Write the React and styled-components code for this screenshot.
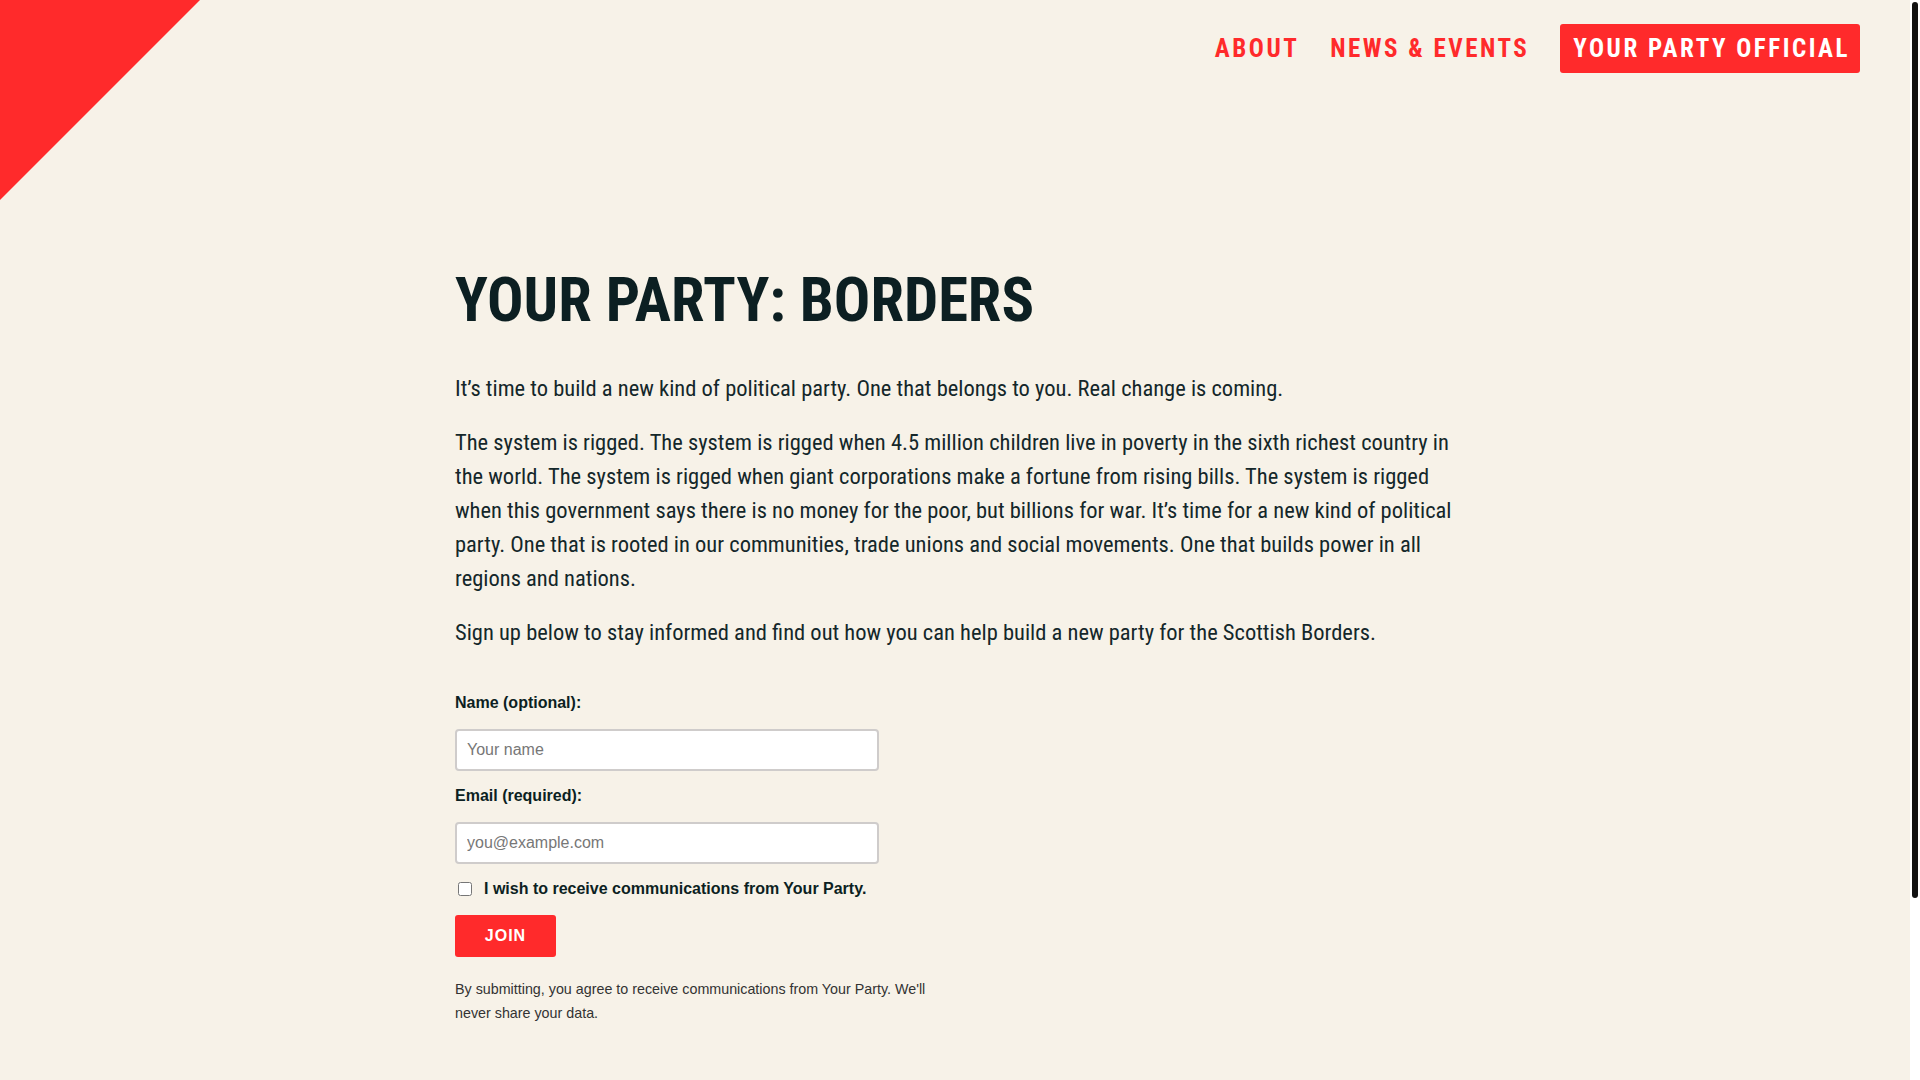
import styled, { createGlobalStyle } from "styled-components";

const red = "#ff2a2b";
const ink = "#0c1f22";
const narrow = `"Roboto Condensed", "Liberation Sans", sans-serif`;
const sans = `"Liberation Sans", Arial, sans-serif`;

const GlobalStyle = createGlobalStyle`
  html, body {
    margin: 0;
    padding: 0;
    height: 100%;
    overflow: hidden;
    background: #f7f2e8;
  }

  body {
    font-family: ${sans};
    color: ${ink};
  }
`;

const Page = styled.div`
  display: flex;
  height: 100vh;
  background: #f7f2e8;
`;

const Scroller = styled.div`
  flex: 1;
  overflow-y: auto;
  scrollbar-width: none;

  &::-webkit-scrollbar {
    display: none;
  }
`;

const Rail = styled.div`
  width: 10px;
  box-sizing: border-box;
  padding: 2px;
  background: #fff;
`;

const Thumb = styled.div`
  height: 896px;
  border-radius: 3px;
  background: #111;
`;

const Content = styled.div`
  padding-bottom: 290px;
`;

const Header = styled.header`
  display: flex;
  justify-content: space-between;
  align-items: flex-start;
  height: 200px;
`;

const Corner = styled.div`
  width: 200px;
  height: 200px;
  background: ${red};
  clip-path: polygon(0 0, 100% 0, 0 100%);
`;

const Nav = styled.nav`
  display: flex;
  align-items: center;
  gap: 31px;
  margin: 24px 50px 0 0;
`;

const NavLink = styled.a`
  display: inline-flex;
  align-items: center;
  height: 49px;
  padding: ${({ $cta }) => ($cta ? "0 10px 0 13px" : "0")};
  font-family: ${narrow};
  font-weight: 700;
  font-size: 25px;
  letter-spacing: 2.5px;
  text-transform: uppercase;
  text-decoration: none;
  color: ${({ $cta }) => ($cta ? "#fff" : red)};
  background: ${({ $cta }) => ($cta ? red : "transparent")};
  border-radius: ${({ $cta }) => ($cta ? "3px" : "0")};
`;

const Main = styled.main`
  max-width: 1000px;
  margin: 0 auto;
  padding-top: 65px;
`;

const Title = styled.h1`
  margin: 0 0 34px;
  font-family: ${narrow};
  font-weight: 700;
  font-size: 60.6px;
  line-height: 72px;
  color: ${ink};
`;

const Paragraph = styled.p`
  margin: 0 0 20px;
  font-family: ${narrow};
  font-size: 22.5px;
  line-height: 34px;
  color: #14272a;
`;

const Form = styled.form`
  display: flex;
  flex-direction: column;
  align-items: flex-start;
  max-width: 480px;
  padding-top: 25px;
  font-family: ${sans};
`;

const Label = styled.label`
  font-weight: 700;
  font-size: 16px;
  line-height: 18px;
  color: ${ink};
  margin-bottom: 17px;
`;

const Input = styled.input`
  box-sizing: border-box;
  width: 424px;
  height: 42px;
  padding: 0 10px;
  margin-bottom: 16px;
  border: 2px solid #cfcccb;
  border-radius: 4px;
  background: #fff;
  font-family: ${sans};
  font-size: 16px;
  color: ${ink};

  &::placeholder {
    color: #777;
  }
`;

const CheckRow = styled.label`
  display: flex;
  align-items: center;
  gap: 12px;
  margin: 0 0 17px;
  font-weight: 700;
  font-size: 16px;
  line-height: 18px;
  color: ${ink};
`;

const Check = styled.input`
  width: 14px;
  height: 14px;
  margin: 0 0 0 3px;
`;

const JoinButton = styled.button`
  width: 101px;
  height: 42px;
  border: none;
  border-radius: 3px;
  background: ${red};
  color: #fff;
  font-family: ${sans};
  font-weight: 700;
  font-size: 16px;
  letter-spacing: 1px;
  text-transform: uppercase;
  cursor: pointer;
`;

const Disclaimer = styled.p`
  margin: 20px 0 0;
  font-size: 14.3px;
  line-height: 24px;
  color: #333;
`;

export default function App() {
  return (
    <>
      <GlobalStyle />
      <Page>
        <Scroller>
          <Content>
            <Header>
              <Corner />
              <Nav>
                <NavLink href="#">About</NavLink>
                <NavLink href="#">News &amp; Events</NavLink>
                <NavLink href="#" $cta>
                  Your Party Official
                </NavLink>
              </Nav>
            </Header>

            <Main>
              <Title>YOUR PARTY: BORDERS</Title>
              <Paragraph>
                It’s time to build a new kind of political party. One that
                belongs to you. Real change is coming.
              </Paragraph>
              <Paragraph>
                The system is rigged. The system is rigged when 4.5 million
                children live in poverty in the sixth richest country in the
                world. The system is rigged when giant corporations make a
                fortune from rising bills. The system is rigged when this
                government says there is no money for the poor, but billions
                for war. It’s time for a new kind of political party. One that
                is rooted in our communities, trade unions and social
                movements. One that builds power in all regions and nations.
              </Paragraph>
              <Paragraph>
                Sign up below to stay informed and find out how you can help
                build a new party for the Scottish Borders.
              </Paragraph>

              <Form onSubmit={(e) => e.preventDefault()}>
                <Label htmlFor="name">Name (optional):</Label>
                <Input id="name" type="text" placeholder="Your name" />
                <Label htmlFor="email">Email (required):</Label>
                <Input id="email" type="email" placeholder="you@example.com" />
                <CheckRow>
                  <Check type="checkbox" />I wish to receive communications
                  from Your Party.
                </CheckRow>
                <JoinButton type="submit">Join</JoinButton>
                <Disclaimer>
                  By submitting, you agree to receive communications from Your
                  Party. We'll never share your data.
                </Disclaimer>
              </Form>
            </Main>
          </Content>
        </Scroller>
        <Rail>
          <Thumb />
        </Rail>
      </Page>
    </>
  );
}
